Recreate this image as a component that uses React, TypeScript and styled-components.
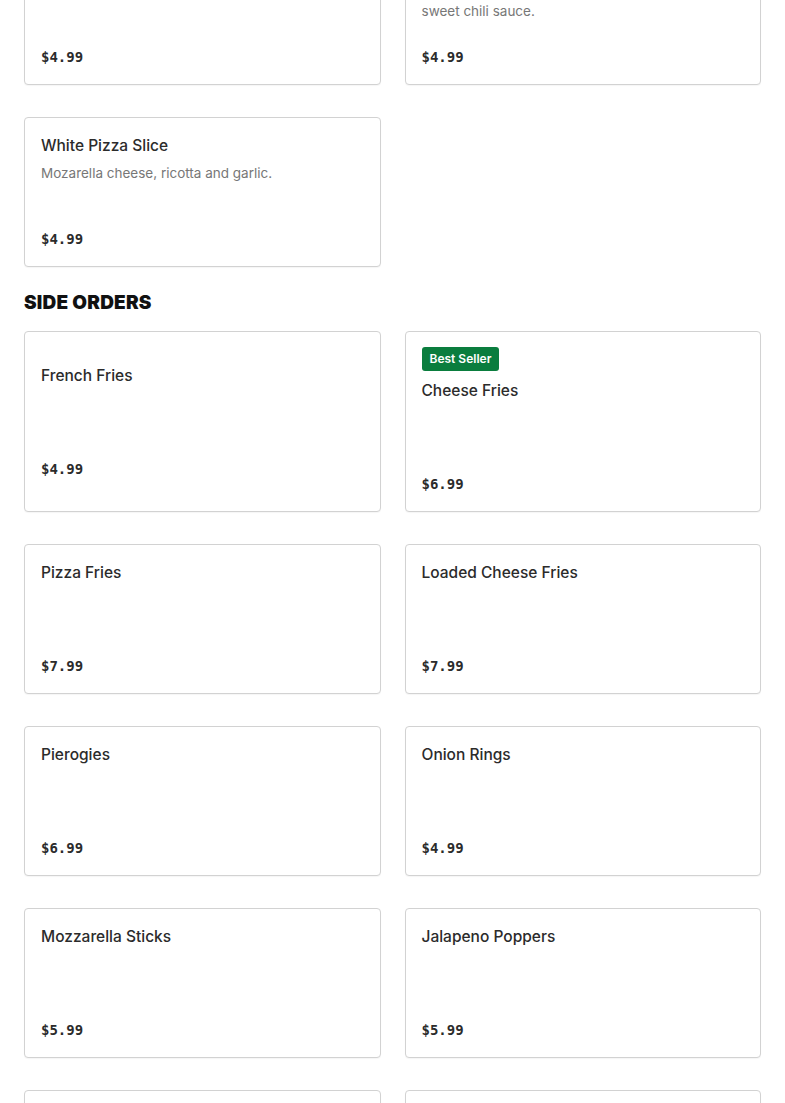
import styled, { createGlobalStyle } from 'styled-components';
import React from 'react';

const GlobalStyle = createGlobalStyle`
    body {
        margin: 0;
        background: #ffffff;
        font-family: Inter, "Noto Sans", sans-serif;
        color: #2d2d2d;
    }
`;

interface MenuItem {
    name: string,
    description?: string,
    price: string,
    bestSeller?: boolean
}

interface MenuSection {
    title?: string,
    items: MenuItem[]
}

const SECTIONS: MenuSection[] = [
    {
        items: [
            { name: 'Buffalo Chicken Slice', description: 'Buffalo chicken, mozzarella and blue cheese.', price: '$4.99' },
            { name: 'Thai Chicken Slice', description: 'Grilled chicken, mozzarella, scallions, peanuts and\nsweet chili sauce.', price: '$4.99' },
            { name: 'White Pizza Slice', description: 'Mozarella cheese, ricotta and garlic.', price: '$4.99' },
        ]
    },
    {
        title: 'SIDE ORDERS',
        items: [
            { name: 'French Fries', price: '$4.99' },
            { name: 'Cheese Fries', price: '$6.99', bestSeller: true },
            { name: 'Pizza Fries', price: '$7.99' },
            { name: 'Loaded Cheese Fries', price: '$7.99' },
            { name: 'Pierogies', price: '$6.99' },
            { name: 'Onion Rings', price: '$4.99' },
            { name: 'Mozzarella Sticks', price: '$5.99' },
            { name: 'Jalapeno Poppers', price: '$5.99' },
            { name: 'Chicken Fingers', price: '$8.99' },
            { name: 'Buffalo Wings', price: '$9.99' },
        ]
    }
];

const Page = styled.div`
    display: flex;
    flex-direction: column;
    padding: 0 24px 40px;
    /* page is scrolled part way down the menu */
    margin-top: -65px;
`;

const Section = styled.section`
    display: flex;
    flex-direction: column;
    & + & {
        margin-top: 23px;
    }
`;

const SectionTitle = styled.h2`
    margin: 0 0 15px;
    font-family: Inter, "Liberation Sans", sans-serif;
    font-size: 19px;
    line-height: 26px;
    font-weight: 900;
    letter-spacing: 0.2px;
    color: #111111;
`;

const Grid = styled.div`
    display: grid;
    grid-template-columns: 1fr 1fr;
    column-gap: 24px;
    row-gap: 32px;
`;

const Card = styled.div`
    display: flex;
    align-items: center;
    padding: 15px 16px;
    border: 1px solid #d2d2d2;
    border-radius: 4px;
    box-shadow: 0 1px 1px rgba(0, 0, 0, 0.04);
    background: #ffffff;
`;

const CardInner = styled.div`
    display: flex;
    flex-direction: column;
    width: 100%;
`;

const Badge = styled.span`
    align-self: flex-start;
    height: 24px;
    line-height: 24px;
    padding: 0 8px;
    margin-bottom: 7px;
    border-radius: 3px;
    background: #0a7d3e;
    color: #ffffff;
    font-size: 12px;
    font-weight: 600;
`;

const ItemName = styled.div`
    padding-top: 1px;
    font-size: 15.5px;
    line-height: 24px;
    font-weight: 500;
    color: #2b2b2b;
`;

const Body = styled.div`
    display: flex;
    flex-direction: column;
    min-height: 69px;
`;

const Description = styled.p`
    margin: 5px 0 0;
    font-size: 13.5px;
    line-height: 20px;
    color: #777777;
    white-space: pre-line;
`;

const Price = styled.div`
    font-family: "DejaVu Sans Mono", "Liberation Mono", monospace;
    font-size: 14px;
    line-height: 24px;
    font-weight: 700;
    color: #2b2b2b;
`;

const MenuCard: React.FC<{ item: MenuItem }> = ({ item }) => {
    return (
        <Card>
            <CardInner>
                {item.bestSeller && <Badge>Best Seller</Badge>}
                <ItemName>{item.name}</ItemName>
                <Body>
                    {item.description && <Description>{item.description}</Description>}
                </Body>
                <Price>{item.price}</Price>
            </CardInner>
        </Card>
    )
}

const App: React.FC = () => {
    return (
        <>
            <GlobalStyle />
            <Page>
                {SECTIONS.map((section, i) => (
                    <Section key={i}>
                        {section.title && <SectionTitle>{section.title}</SectionTitle>}
                        <Grid>
                            {section.items.map(item => <MenuCard key={item.name} item={item} />)}
                        </Grid>
                    </Section>
                ))}
            </Page>
        </>
    )
}

export default App;
